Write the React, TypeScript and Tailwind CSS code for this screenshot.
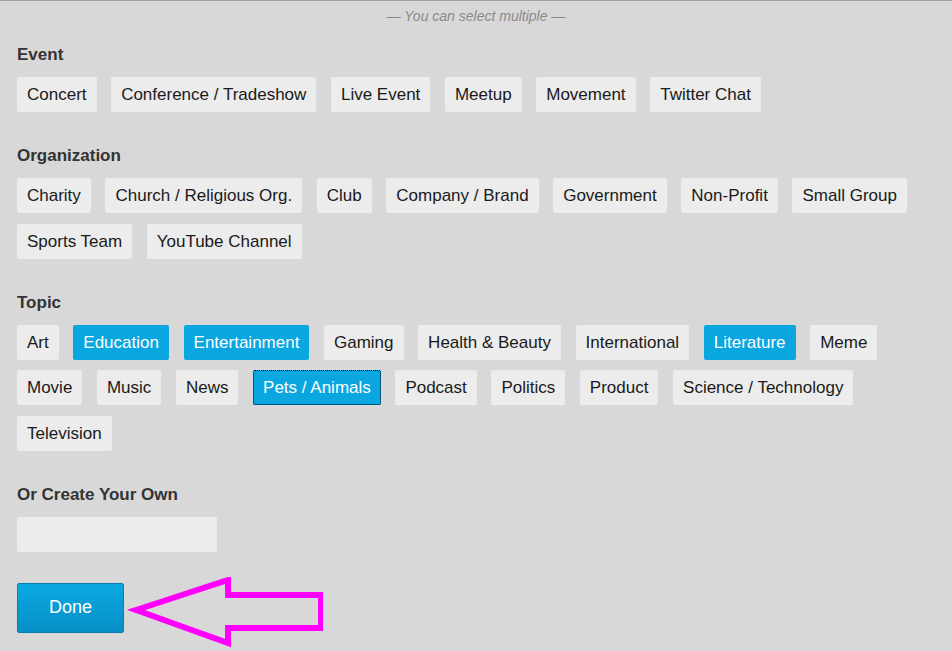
import React, { useState } from "react";

const sections: { title: string; tags: string[] }[] = [
  {
    title: "Event",
    tags: ["Concert", "Conference / Tradeshow", "Live Event", "Meetup", "Movement", "Twitter Chat"],
  },
  {
    title: "Organization",
    tags: [
      "Charity",
      "Church / Religious Org.",
      "Club",
      "Company / Brand",
      "Government",
      "Non-Profit",
      "Small Group",
      "Sports Team",
      "YouTube Channel",
    ],
  },
  {
    title: "Topic",
    tags: [
      "Art",
      "Education",
      "Entertainment",
      "Gaming",
      "Health & Beauty",
      "International",
      "Literature",
      "Meme",
      "Movie",
      "Music",
      "News",
      "Pets / Animals",
      "Podcast",
      "Politics",
      "Product",
      "Science / Technology",
      "Television",
    ],
  },
];

export default function App() {
  const [selected, setSelected] = useState<string[]>(["Education", "Entertainment", "Literature", "Pets / Animals"]);
  const focused = "Pets / Animals";

  const toggle = (tag: string) =>
    setSelected((s) => (s.includes(tag) ? s.filter((t) => t !== tag) : [...s, tag]));

  return (
    <div className="min-h-[651px] w-[952px] bg-[#d8d8d8] border-t border-[#a3a3a3] px-[17px] font-['Liberation_Sans',Arial,sans-serif] overflow-hidden">
      {/* subtitle */}
      <p className="mt-[5px] text-center text-[14px] leading-[20px] italic text-[#8a8a8a]">
        — You can select multiple —
      </p>

      {sections.map((section, i) => (
        <div key={section.title} className={i === 0 ? "mt-[19px]" : "mt-[34px]"}>
          <h3 className="text-[17px] leading-[20px] font-bold text-[#333]">{section.title}</h3>
          <div className="mt-[12px] flex flex-wrap gap-x-[14.6px] gap-y-[10.5px]">
            {section.tags.map((tag) => {
              const on = selected.includes(tag);
              return (
                <button
                  key={tag}
                  onClick={() => toggle(tag)}
                  className={`h-[35px] px-[10px] rounded-[2px] text-[17px] leading-[35px] whitespace-nowrap ${
                    on ? "bg-[#09a6e0] text-white" : "bg-[#ececec] text-[#1a1a1a]"
                  } ${tag === focused ? "outline outline-1 outline-dotted outline-black -outline-offset-1" : ""}`}
                >
                  {tag}
                </button>
              );
            })}
          </div>
        </div>
      ))}

      <div className="mt-[34px]">
        <h3 className="text-[17px] leading-[20px] font-bold text-[#333]">Or Create Your Own</h3>
        <input
          type="text"
          className="mt-[12px] block h-[35px] w-[200px] rounded-[2px] bg-[#ececec] px-[10px] text-[17px] outline-none"
        />
      </div>

      <div className="mt-[31px] flex items-start">
        <button className="h-[50px] w-[107px] rounded-[2px] border border-[#0a7db0] bg-gradient-to-b from-[#0aa9e3] to-[#088fc6] text-[18px] text-white">
          Done
        </button>
        <svg width="200" height="72" viewBox="0 0 200 72" className="-ml-[1px] -mt-[6px]">
          <polygon
            points="13,33 105,3 105,18 198,18 198,51 105,51 105,66"
            fill="none"
            stroke="#ff00ff"
            strokeWidth="6"
            strokeLinejoin="miter"
          />
        </svg>
      </div>
    </div>
  );
}
